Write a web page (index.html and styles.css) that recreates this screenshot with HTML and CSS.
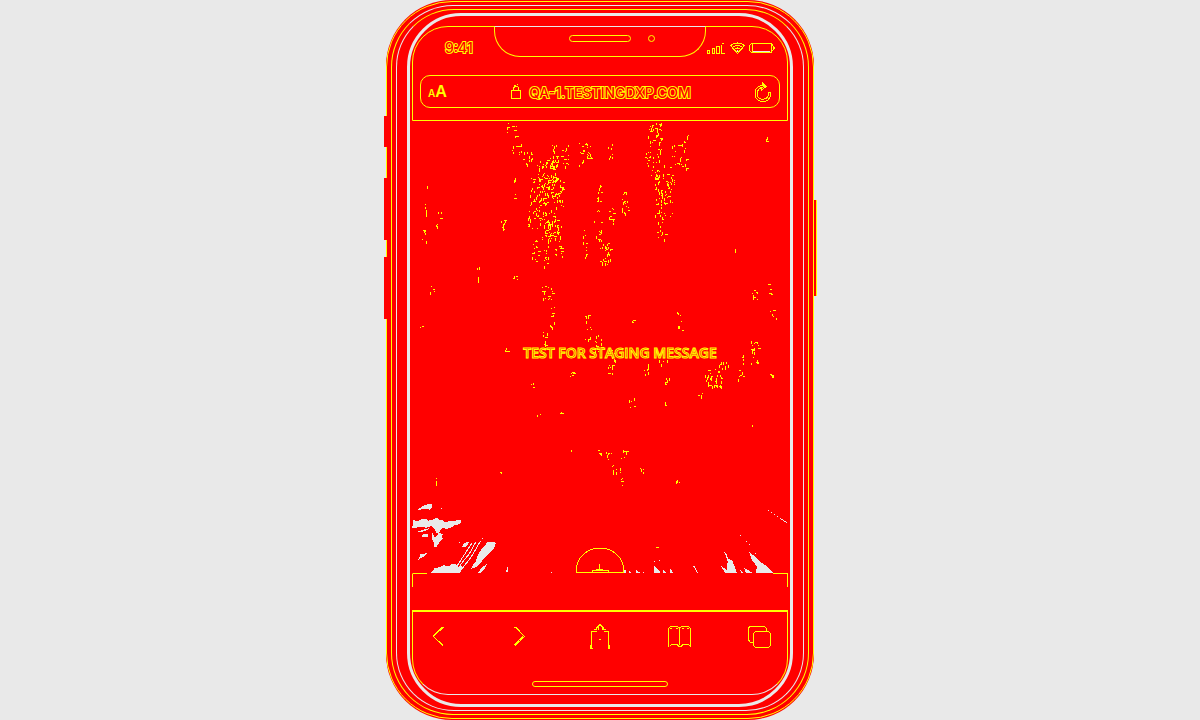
FILE: index.html
```html
<!DOCTYPE html>
<html lang="en">
<head>
<meta charset="utf-8">
<title>qa-1.testingdxp.com</title>
<link rel="stylesheet" href="styles.css">
</head>
<body>
<main class="stage">
  <div class="phone">
    <span class="key key-mute"></span>
    <span class="key key-up"></span>
    <span class="key key-down"></span>
    <span class="key key-power"></span>
    <div class="ring ring-mid"><div class="ring ring-inner"><div class="bezel"><div class="screen">
      <header class="top">
        <div class="notch"><span class="speaker"></span><span class="camera"></span></div>
        <div class="status">
          <time class="clock">9:41</time>
          <svg class="signals" viewBox="0 0 70 14" aria-hidden="true">
            <path d="M1.500 12.500v-3h2v3zM6.500 12.500v-5h2v5zM10.500 12.500v-7h3v7zM16 2.500h2M15.500 4v8.500h3"/>
            <path d="M24.500 4.500q7-5 14 0l-7 8zM26 6.500q5.500-4 11 0M28 8.500q3.500-3 7 0M29 4.500h5M30 10.500h3"/>
            <path d="M45.500 2.500h20v9h-20l-2-2v-5zM65.500 3l3 4-3 4M46 3v8"/>
            <path class="pale" d="M47 10.500h17M31 9v2"/>
          </svg>
        </div>
        <div class="address">
          <button class="text-size" aria-label="Text size"><small>A</small>A</button>
          <span class="site">
            <svg class="lock" viewBox="0 0 12 16" aria-hidden="true"><path d="M1.500 6.500h9v8h-9zM3.500 6V3.500l2-1h2l1 1V6M4 1.500h2M7 .5h1"/></svg>
            <span class="url">QA-1.TESTINGDXP.COM</span>
          </span>
          <button class="reload" aria-label="Reload"><svg viewBox="0 0 18 22"><path d="M8.500 4.500C-1 5-1 18 6 20s11-2 10.500-9M8.500 6.500C2 7 2 17 7 18s8-2 7.500-7M8 1.500l4 4-5 4M8 .5v3l2 2-3 2M14.500 11.500h2"/></svg></button>
        </div>
      </header>
      <section class="page">
        <svg class="residue" viewBox="1236 363 1128 1356" preserveAspectRatio="xMidYMax slice" aria-hidden="true">
          <path id="specks" class="specks" d=""/>
          <g class="shards" transform="translate(1200 1320)">
            <path d="M51 211l12-9 9-6 12-3h12v10l-6 6-15-2-15 2zM39 238l6 4h12l9-5h12l8 5 12-3 12-6 6 6 12 2 9 6 9-4 12 1 18-5 8 1v9l-12 5-8 0-9 8-14 5-12-3-8 6-6 12-7-5-5-12-9-7-15 5-18-3-18 5h-6z"/>
            <path d="M46 277l18-6 28-8-18 11zM64 285l12-3 9 1-3 8-15-1zM96 276l9 18 12-15 13 3-6 10 6 3-12 12-9 14-7 1v-12l-6-12zM49 368l9-15 3-10 22-4-12 11-12 6zM94 398l10-14 15-2 12-6 18 3 6-8 14 3 6 6 12-2v9l-6 11z"/>
            <path d="M186 322l6-12 15-6-3 9-8 9zM213 386l6-12 9-9 3-15 12-21 21-24 24 3-6 18-15 15-15 15-21 25zM234 398l9-12 18-16-6 15-12 13zM315 397l5-8 3-9v17z"/>
            <path class="thin" d="M171 378l45-69M174 386l15-22 18-21 20-36M183 390l30-38 28-48M125 205v2M177 307h3M247 295h3M453 397h3"/>
          </g>
          <g class="shards" transform="translate(1800 1320)">
            <path d="M372 336l8 8 5 12 12 5 7 19 6 18h-34l-9-11-4-9 12 8 6 6 2-28-5-16zM447 336l12 9 15 12 9 11 15 8 9 8 12 14h-51l3-19-15-18z"/>
            <path d="M162 398v-20l6 6 12 12v2zM73 398v-9l5 1v8zM86 398v-8l7 8zM108 398v-8l12 8zM189 398v-10l9 10zM209 398l3-14 7 14zM279 377l6 3 9 18h-3zM432 384l9 4 15 10h-18zM420 390l10 8h-6z"/>
            <path class="thin" d="M503 211h3M513 217h3M522 223h3M531 229h3M540 235l21 13M420 286h3M438 304h3M447 313h3M162 365h3M177 361h3M465 341h3M129 397h3"/>
          </g>
        </svg>
        <p class="message">TEST FOR STAGING MESSAGE</p>
        <button class="add" aria-label="Add"><svg viewBox="0 0 50 26"><path d="M1.500 25.500v-3a23.500 21.500 0 0 1 47 0v3zM24.500 17v7M21 22.500h7M17 25v-1.500h16V25"/></svg></button>
      </section>
      <div class="strip"></div>
      <nav class="tools">
        <div class="icons">
          <button aria-label="Back"><svg viewBox="0 0 26 26"><path d="M16.500 4L6.500 13.500l9.500 9M15 4L5.500 13.500"/></svg></button>
          <button aria-label="Forward"><svg viewBox="0 0 26 26"><path d="M8.500 4L17.500 13.500 8 22.500M16 13.500L7.500 21.500M7 4h2"/></svg></button>
          <button aria-label="Share"><svg viewBox="0 0 26 26"><path d="M4.500 24.500v-16h5M21.500 24.500v-16h-5M9 5.500l4-4 4 4M7 6.500h3M16 6.500h3M11 4v3M15 4v3M3.500 22v3h2M22.500 22v3h-2M12 16h2"/></svg></button>
          <button aria-label="Bookmarks"><svg viewBox="0 0 26 26"><path d="M1.500 23.500v-18l2-2h7l2 2 2-2h7l2 2v18M12.500 4v18M3 22.500l2-1h5l2 2h2l2-2h5l2 1M3 5.500h2M9 5.500h2M15 5.500h2M20 5.500h2"/></svg></button>
          <button aria-label="Tabs"><svg viewBox="0 0 26 26"><path d="M6 19.500H3.500L1.500 17V5l2-2h14l2 3v3M8.500 8.500h13l2 2v12l-2 2h-13l-2-2v-12z"/></svg></button>
        </div>
        <span class="home"></span>
      </nav>
    </div></div></div></div>
  </div>
</main>
<script src="specks.js"></script>
</body>
</html>
```
FILE: styles.css
```css
:root {
  --red: #ff0000;
  --yellow: #ffff00;
  --pale: #e9e9e9;
}
* { box-sizing: border-box; }
body {
  margin: 0;
  background: var(--pale);
  color: var(--red);
  font-family: Inter, "Liberation Sans", sans-serif;
}
.stage {
  display: flex;
  justify-content: center;
  height: 100vh;
  min-height: 560px;
  padding: 1px 0;
  overflow: hidden;
}
.phone {
  position: relative;
  width: 428px;
  padding: 3px 4px;
  border: 1px solid var(--yellow);
  border-radius: 66px;
  background: var(--red);
  box-shadow: 0 1px var(--red), 0 -1px var(--red);
}
.key {
  position: absolute;
  left: -3px;
  width: 3px;
  background: var(--red);
  border-left: 1px solid var(--red);
}
.key-mute { top: 114px; height: 31px; }
.key-up { top: 176px; height: 62px; }
.key-down { top: 255px; height: 62px; }
.key-power {
  top: 198px;
  left: auto;
  right: -4px;
  height: 96px;
  border-left: 0;
  border-right: 1px solid var(--yellow);
}
.ring {
  height: 100%;
  border: 1px solid var(--yellow);
}
.ring-mid { padding: 3px 4px; border-radius: 62px; border-color: var(--pale) var(--yellow) var(--yellow); }
.ring-inner { padding: 3px 10px; border-radius: 58px; border-color: var(--yellow) var(--pale) var(--pale); }
.bezel {
  height: 100%;
  padding: 10px 2px 9px;
  border: 3px solid var(--pale);
  border-radius: 54px;
}
.screen {
  display: flex;
  flex-direction: column;
  height: 100%;
}
.top {
  position: relative;
  border: 1px solid var(--yellow);
  border-radius: 36px 36px 0 0;
  padding: 0 7px 12px;
}
.notch {
  position: absolute;
  top: -1px;
  left: 50%;
  width: 212px;
  height: 31px;
  margin-left: -106px;
  border: 1px solid var(--yellow);
  border-top-color: var(--pale);
  border-radius: 0 0 26px 26px;
}
.speaker, .camera {
  position: absolute;
  border: 1px solid var(--yellow);
  border-radius: 4px;
}
.speaker { top: 8px; left: 74px; width: 62px; height: 7px; }
.camera { top: 8px; left: 153px; width: 7px; height: 7px; }
.status {
  display: flex;
  align-items: center;
  justify-content: space-between;
  height: 42px;
  padding: 0 4px 0 25px;
}
.clock, .url, .message {
  -webkit-text-stroke: 2px var(--yellow);
  paint-order: stroke;
}
.clock { font-size: 14px; line-height: 16px; font-weight: 500; }
svg {
  display: block;
  fill: none;
  stroke: var(--yellow);
  shape-rendering: crispEdges;
}
.signals { width: 70px; height: 14px; }
.pale { stroke: var(--pale); }
button {
  padding: 0;
  border: 0;
  background: none;
  color: inherit;
  font: inherit;
}
.address {
  display: flex;
  align-items: center;
  justify-content: space-between;
  height: 33px;
  margin-top: 6px;
  padding: 1px 7px 0;
  border: 1px solid var(--yellow);
  border-radius: 10px;
}
.text-size {
  color: var(--yellow);
  font-size: 16px;
  line-height: 20px;
  font-weight: 600;
}
.text-size small { font-size: 10px; }
.site { display: flex; align-items: center; gap: 7px; }
.lock { width: 12px; height: 16px; }
.url { font-size: 14px; line-height: 18px; font-weight: 500; padding-top: 2px; }
.reload svg { width: 18px; height: 22px; }
.page {
  display: grid;
  flex: 1;
  min-height: 0;
  overflow: hidden;
}
.page > * { grid-area: 1 / 1; }
.residue { width: 100%; height: 100%; min-height: 0; }
.specks { fill: var(--yellow); stroke: none; }
.shards { fill: var(--pale); stroke: none; }
.thin { fill: none; stroke: var(--pale); stroke-width: 3; }
.message {
  place-self: center;
  margin: 0;
  padding: 12px 0 0 40px;
  font-family: "Open Sans", "Liberation Sans", sans-serif;
  font-size: 14px;
  line-height: 16px;
  font-weight: 600;
  white-space: nowrap;
  -webkit-text-stroke-width: 1px;
  paint-order: normal;
}
.add { place-self: end center; }
.add svg { width: 50px; height: 26px; }
.strip {
  height: 37px;
  border: 1px solid var(--yellow);
  border-top-color: transparent;
  border-bottom: 0;
  background: linear-gradient(var(--yellow), var(--yellow)) 0 0 / 15px 1px no-repeat border-box,
    linear-gradient(var(--yellow), var(--yellow)) 100% 0 / 15px 1px no-repeat border-box;
  clip-path: inset(0 0 23px 0);
}
.tools {
  display: flex;
  flex-direction: column;
  align-items: center;
  justify-content: space-between;
  height: 85px;
  padding: 11px 14px 7px;
  border: 1px solid var(--yellow);
  border-top-width: 2px;
  border-bottom-color: var(--pale);
  border-radius: 0 0 36px 36px;
}
.icons {
  display: flex;
  justify-content: space-between;
  width: 100%;
}
.icons svg { width: 26px; height: 26px; }
.home {
  width: 136px;
  height: 6px;
  border: 1px solid var(--yellow);
  border-radius: 3px;
}
```
FILE: specks.js
```js
// Clusters of changed pixels: left, top, width, height, number of strokes.
const clusters = [
  [507, 121, 11, 16, 9], [512, 144, 10, 9, 8], [519, 152, 14, 16, 14], [514, 178, 4, 22, 6],
  [550, 145, 19, 22, 36], [537, 160, 22, 30, 60], [530, 178, 34, 32, 95], [528, 210, 28, 20, 45],
  [542, 220, 20, 22, 50], [531, 240, 8, 26, 13], [543, 246, 6, 22, 11], [555, 246, 8, 11, 13],
  [579, 143, 13, 23, 24], [501, 219, 5, 11, 9], [423, 204, 4, 12, 5], [436, 212, 6, 18, 7],
  [422, 229, 5, 13, 6], [425, 183, 3, 6, 2], [583, 230, 4, 28, 10], [594, 220, 8, 26, 12],
  [597, 185, 5, 36, 14], [608, 144, 5, 17, 10], [600, 240, 11, 26, 30], [608, 205, 6, 19, 10],
  [622, 190, 8, 27, 18], [648, 121, 14, 32, 36], [645, 150, 20, 26, 26], [670, 144, 17, 25, 26],
  [684, 134, 6, 12, 6], [655, 174, 18, 44, 70], [657, 218, 9, 24, 12], [671, 174, 4, 24, 7],
  [765, 137, 5, 5, 4], [732, 249, 4, 3, 2], [477, 266, 4, 3, 2], [477, 277, 4, 4, 2],
  [513, 276, 5, 4, 4], [540, 282, 13, 18, 16], [550, 306, 5, 22, 12], [543, 330, 5, 16, 9],
  [585, 314, 7, 28, 13], [595, 335, 8, 20, 12], [430, 286, 5, 8, 4], [419, 324, 4, 4, 2],
  [505, 347, 3, 5, 4], [570, 372, 4, 5, 5], [531, 383, 4, 5, 4], [537, 414, 4, 2, 2],
  [560, 412, 4, 4, 3], [752, 290, 7, 11, 9], [768, 283, 4, 14, 4], [770, 309, 7, 15, 5],
  [677, 311, 6, 20, 7], [631, 320, 3, 5, 3], [612, 350, 4, 11, 7], [608, 365, 5, 9, 8],
  [644, 363, 6, 14, 7], [659, 358, 9, 8, 6], [665, 377, 5, 9, 6], [704, 369, 18, 18, 42],
  [718, 361, 12, 8, 10], [697, 392, 6, 8, 5], [738, 369, 6, 11, 6], [742, 355, 4, 10, 4],
  [750, 340, 9, 24, 20], [769, 371, 5, 5, 4], [629, 394, 7, 14, 5], [665, 402, 4, 4, 3],
  [752, 425, 4, 3, 2], [571, 450, 4, 4, 2], [596, 449, 6, 10, 5], [606, 452, 6, 8, 7],
  [612, 461, 5, 14, 6], [620, 450, 7, 10, 7], [619, 468, 4, 18, 6], [640, 467, 5, 6, 4],
  [676, 480, 4, 5, 3], [433, 472, 4, 12, 3], [498, 470, 5, 4, 2], [656, 547, 2, 2, 1]
];

let seed = 41;
function next() {
  seed = (seed * 16807) % 2147483647;
  return seed / 2147483647;
}

// The drawing uses three units for each screen pixel.
let d = "";
for (const [x, y, w, h, n] of clusters) {
  for (let i = 0; i < n; i++) {
    const px = x + Math.floor(next() * w);
    const py = y + Math.floor(next() * h);
    const tall = next() < 0.65;
    const size = 1 + Math.floor(next() * 3);
    const run = size * 3;
    d += tall ? `M${px * 3} ${py * 3}h3v${run}h-3z` : `M${px * 3} ${py * 3}h${run}v3h${-run}z`;
  }
}
document.getElementById("specks").setAttribute("d", d);
```
